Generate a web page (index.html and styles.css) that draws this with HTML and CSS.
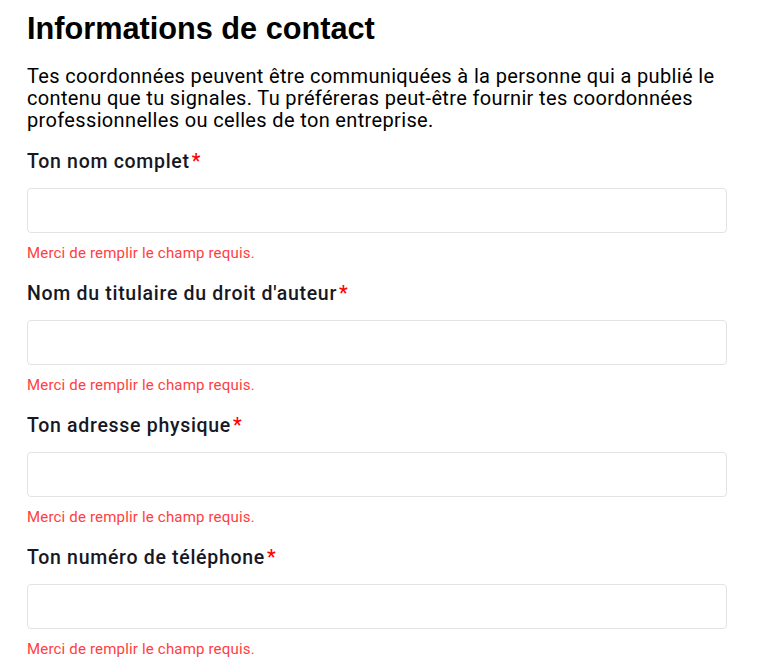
FILE: index.html
```html
<!DOCTYPE html>
<html lang="fr">
<head>
<meta charset="utf-8">
<title>Informations de contact</title>
<link rel="stylesheet" href="styles.css">
</head>
<body>
<main class="form">
  <h1 class="title">Informations de contact</h1>
  <p class="intro">Tes coordonnées peuvent être communiquées à la personne qui a publié le contenu que tu signales. Tu préféreras peut-être fournir tes coordonnées professionnelles ou celles de ton entreprise.</p>
  <div class="field">
    <label class="label">Ton nom complet<span class="req">*</span></label>
    <input class="input" type="text">
    <div class="error">Merci de remplir le champ requis.</div>
  </div>
  <div class="field">
    <label class="label">Nom du titulaire du droit d'auteur<span class="req">*</span></label>
    <input class="input" type="text">
    <div class="error">Merci de remplir le champ requis.</div>
  </div>
  <div class="field">
    <label class="label">Ton adresse physique<span class="req">*</span></label>
    <input class="input" type="text">
    <div class="error">Merci de remplir le champ requis.</div>
  </div>
  <div class="field">
    <label class="label">Ton numéro de téléphone<span class="req">*</span></label>
    <input class="input" type="text">
    <div class="error">Merci de remplir le champ requis.</div>
  </div>
</main>
</body>
</html>
```
FILE: styles.css
```css
html, body {
  margin: 0;
  padding: 0;
  background: #fff;
}
body {
  font-family: Roboto, "Liberation Sans", Arial, sans-serif;
  color: #000;
}
.form {
  width: 700px;
  padding: 11px 0 0 27px;
  display: flex;
  flex-direction: column;
}
.title {
  margin: 0;
  font-family: "Liberation Sans", Arial, sans-serif;
  font-size: 30.7px;
  line-height: 36px;
  font-weight: 700;
}
.intro {
  margin: 18px 0 0;
  font-size: 20px;
  line-height: 22px;
  letter-spacing: 0.35px;
  color: #000;
}
.field {
  display: flex;
  flex-direction: column;
  padding-bottom: 5px;
}
.field:first-of-type { margin-top: 19px; }
.label {
  font-size: 19.5px;
  line-height: 24px;
  font-weight: 500;
  letter-spacing: 0.7px;
  color: #161823;
}
.req {
  color: #ff0000;
  margin-left: 2px;
  letter-spacing: 0;
}
.input {
  margin: 14px 0 0;
  height: 45px;
  box-sizing: border-box;
  border: 1px solid #e3e3e3;
  border-radius: 4px;
  background: #fff;
  outline: none;
}
.error {
  margin: 12px 0 0;
  font-size: 15px;
  line-height: 16px;
  letter-spacing: 0.18px;
  color: #ff4040;
  height: 32px;
}
```
